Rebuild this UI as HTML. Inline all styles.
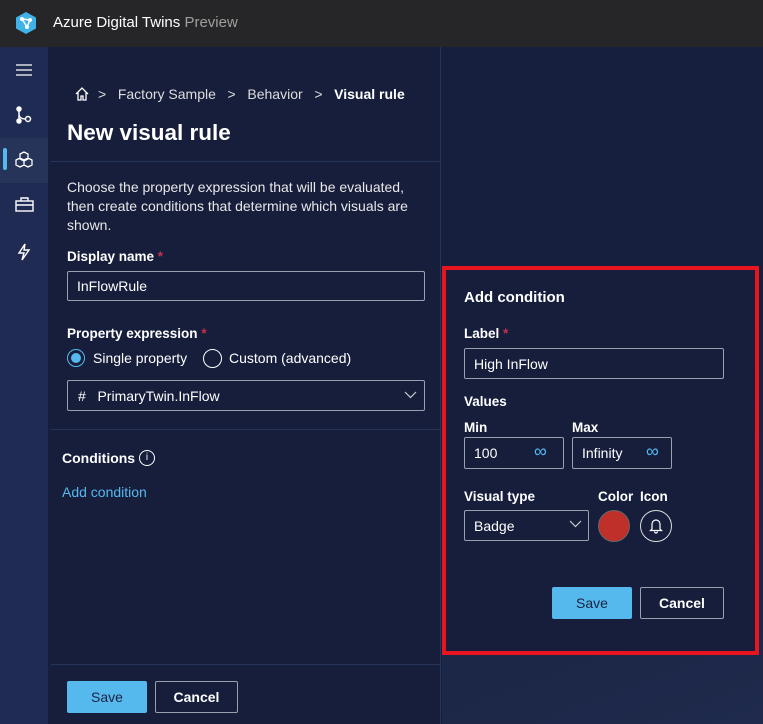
<!DOCTYPE html>
<html><head><style>
*{box-sizing:border-box;margin:0;padding:0}
body{width:763px;height:724px;overflow:hidden;background:#161f3d;font-family:"Liberation Sans",sans-serif;color:#fff;position:relative}
.abs{position:absolute}
.hdr{left:0;top:0;width:763px;height:47px;background:#262527}
.side{left:0;top:47px;width:48px;height:677px;background:#1f2b52}
.left{left:48px;top:47px;width:393px;height:677px;background:#161e3c;border-right:1px solid #26335a}
.right{left:442px;top:47px;width:321px;height:677px;background:linear-gradient(160deg,#161f3d 40%,#1f2a4c 100%)}
.t{position:absolute;white-space:nowrap}
.lbl{font-weight:bold;font-size:13.5px}
.inp{position:absolute;border:1px solid #9aa0ad;border-radius:2px;font-size:14px;padding-left:9px;display:flex;align-items:center}
.req{color:#c4314b}
.btnp{position:absolute;background:#55b9ee;color:#1a2340;font-size:14px;display:flex;align-items:center;justify-content:center;border-radius:2px}
.btns{position:absolute;border:1px solid #9aa0ad;color:#fff;font-size:14px;font-weight:bold;display:flex;align-items:center;justify-content:center;border-radius:2px}
.hl{position:absolute;height:1px;background:#27345a}
</style></head><body>
<div class="abs hdr"></div>
<svg class="abs" style="left:14px;top:11px" width="24" height="24" viewBox="0 0 24 24"><path d="M12 1 L22 6.5 V17.5 L12 23 L2 17.5 V6.5Z" fill="#3fb3e8"/><path d="M8 8 L16 9 L13 16Z" stroke="#fff" stroke-width="1.5" fill="none"/><circle cx="8" cy="8" r="2" fill="#fff"/><circle cx="16" cy="9" r="2" fill="#fff"/><circle cx="13" cy="16" r="2" fill="#fff"/></svg>
<div class="t" style="left:53px;top:14px;font-size:15px">Azure Digital Twins <span style="color:#a19f9d">Preview</span></div>
<div class="abs side"></div>
<div class="abs" style="left:0;top:138px;width:48px;height:45px;background:#263459"></div>
<div class="abs" style="left:3px;top:148px;width:4px;height:22px;background:#55b9ee;border-radius:2px"></div>
<svg class="abs" style="left:15px;top:63px" width="18" height="14"><path d="M1 2H17M1 7H17M1 12H17" stroke="#fff" stroke-width="1.3"/></svg>
<svg class="abs" style="left:15px;top:106px" width="18" height="18" fill="none" stroke="#fff" stroke-width="1.5"><circle cx="4" cy="3" r="2" fill="#fff"/><circle cx="4" cy="15" r="2" fill="#fff"/><circle cx="13" cy="13" r="2.5"/><path d="M4 3V15M4 9Q5 13 10.5 13"/></svg>
<svg class="abs" style="left:15px;top:151px" width="19" height="18" fill="none" stroke="#fff" stroke-width="1.3"><path d="M1 9l4-2 4 2v5l-4 2-4-2z M9 9l4-2 4 2v5l-4 2-4-2z M5 3l4-2 4 2v5l-4 2-4-2z"/></svg>
<svg class="abs" style="left:15px;top:197px" width="19" height="15" fill="none" stroke="#fff" stroke-width="1.4"><rect x="1" y="4" width="17" height="10"/><path d="M6 4V1H13V4M1 8H18"/></svg>
<svg class="abs" style="left:17px;top:243px" width="14" height="18" fill="none" stroke="#fff" stroke-width="1.4"><path d="M8 1L2 10H7L5 17L12 7H7Z"/></svg>
<div class="abs left"></div>
<div class="abs right"></div>
<svg class="abs" style="left:74px;top:86px" width="16" height="16" fill="none" stroke="#fff" stroke-width="1.3"><path d="M2 8L8 2L14 8M4 6V14H7V10H9V14H12V6"/></svg>
<div class="t" style="left:98px;top:86px;font-size:14px;color:#ddd">&gt;&nbsp;&nbsp;&nbsp;Factory Sample&nbsp;&nbsp;&nbsp;&gt;&nbsp;&nbsp;&nbsp;Behavior&nbsp;&nbsp;&nbsp;&gt;&nbsp;&nbsp;&nbsp;<b style="color:#fff">Visual rule</b></div>
<div class="t" style="left:67px;top:120px;font-size:22.5px;font-weight:bold">New visual rule</div>
<div class="hl" style="left:51px;top:161px;width:390px"></div>
<div class="t" style="left:67px;top:178px;font-size:14px;line-height:19px;color:#e8e8e8;white-space:normal;width:352px">Choose the property expression that will be evaluated, then create conditions that determine which visuals are shown.</div>
<div class="t lbl" style="left:67px;top:249px">Display name <span class="req">*</span></div>
<div class="inp" style="left:67px;top:271px;width:358px;height:30px">InFlowRule</div>
<div class="t lbl" style="left:67px;top:326px">Property expression <span class="req">*</span></div>
<div class="abs" style="left:67px;top:349px;width:18px;height:18px;border:1.5px solid #55b9ee;border-radius:50%"></div>
<div class="abs" style="left:71px;top:353px;width:10px;height:10px;background:#55b9ee;border-radius:50%"></div>
<div class="t" style="left:93px;top:350px;font-size:14px">Single property</div>
<div class="abs" style="left:203px;top:349px;width:19px;height:19px;border:1.5px solid #fff;border-radius:50%"></div>
<div class="t" style="left:229px;top:350px;font-size:14px">Custom (advanced)</div>
<div class="inp" style="left:67px;top:380px;width:358px;height:31px;padding-left:10px">#&nbsp;&nbsp; PrimaryTwin.InFlow</div>
<svg class="abs" style="left:404px;top:391px" width="13" height="8" fill="none" stroke="#ccc" stroke-width="1.2"><path d="M1 1L6.5 6.5L12 1"/></svg>
<div class="hl" style="left:51px;top:429px;width:390px"></div>
<div class="t lbl" style="left:62px;top:450px;font-size:14px">Conditions</div>
<div class="abs" style="left:139px;top:450px;width:16px;height:16px;border:1.3px solid #fff;border-radius:50%;font-size:10px;text-align:center;line-height:14px">i</div>
<div class="t" style="left:62px;top:484px;font-size:14px;color:#55b9ee">Add condition</div>
<div class="hl" style="left:51px;top:664px;width:390px"></div>
<div class="btnp" style="left:67px;top:681px;width:80px;height:32px">Save</div>
<div class="btns" style="left:155px;top:681px;width:83px;height:32px">Cancel</div>
<div class="abs" style="left:442px;top:266px;width:317px;height:389px;border:4px solid #e8141e;background:#161e3c"></div>
<div class="t" style="left:464px;top:289px;font-size:15px;font-weight:bold">Add condition</div>
<div class="t lbl" style="left:464px;top:326px">Label <span class="req">*</span></div>
<div class="inp" style="left:464px;top:348px;width:260px;height:31px">High InFlow</div>
<div class="t lbl" style="left:464px;top:394px">Values</div>
<div class="t lbl" style="left:464px;top:420px">Min</div>
<div class="t lbl" style="left:572px;top:420px">Max</div>
<div class="inp" style="left:464px;top:437px;width:100px;height:32px">100</div>
<div class="t" style="left:534px;top:441px;font-size:18px;color:#55b9ee">∞</div>
<div class="inp" style="left:572px;top:437px;width:100px;height:32px">Infinity</div>
<div class="t" style="left:646px;top:441px;font-size:18px;color:#55b9ee">∞</div>
<div class="t lbl" style="left:464px;top:489px">Visual type</div>
<div class="t lbl" style="left:598px;top:489px">Color</div>
<div class="t lbl" style="left:640px;top:489px">Icon</div>
<div class="inp" style="left:464px;top:510px;width:125px;height:31px">Badge</div>
<svg class="abs" style="left:569px;top:520px" width="13" height="8" fill="none" stroke="#ccc" stroke-width="1.2"><path d="M1 1L6.5 6.5L12 1"/></svg>
<div class="abs" style="left:598px;top:510px;width:32px;height:32px;border-radius:50%;background:#c0302a;border:1px solid #666"></div>
<div class="abs" style="left:640px;top:510px;width:32px;height:32px;border-radius:50%;border:1px solid #ddd"></div>
<svg class="abs" style="left:649px;top:518px" width="14" height="16" fill="none" stroke="#fff" stroke-width="1.2"><path d="M3 11V6a4 4 0 0 1 8 0v5l1.5 1.5h-11Z M5.5 13.5a1.5 1.5 0 0 0 3 0"/></svg>
<div class="btnp" style="left:552px;top:587px;width:80px;height:32px">Save</div>
<div class="btns" style="left:640px;top:587px;width:84px;height:32px">Cancel</div>
</body></html>
